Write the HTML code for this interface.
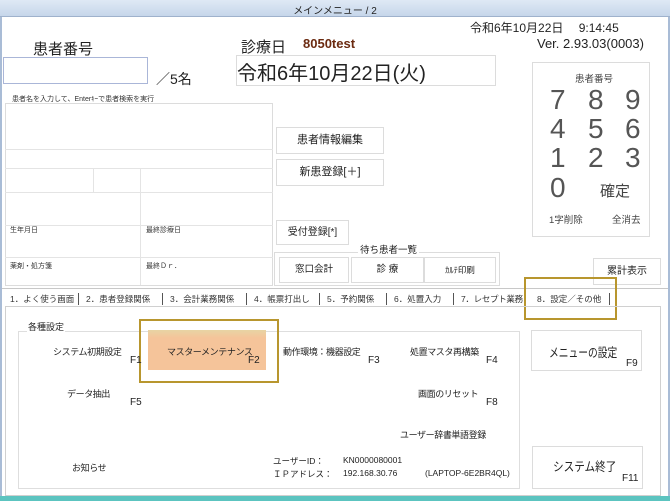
<!DOCTYPE html>
<html><head><meta charset="utf-8"><style>
*{margin:0;padding:0;box-sizing:border-box}
body{width:670px;height:501px;overflow:hidden;background:#fff;font-family:"Liberation Sans","Noto Sans CJK JP",sans-serif;color:#222;position:relative}
.a{position:absolute;white-space:nowrap}
.b{position:absolute;border:1px solid #dcdcdc;background:#fff}
.t{font-size:8.5px;color:#333}
.p{font-size:9px;letter-spacing:-0.4px}
.k{font-size:28px;color:#555;font-weight:300}
</style></head><body>
<div class="a" style="left:0;top:0;width:670px;height:17px;background:linear-gradient(#dfe9f5,#c6d6ea);border-bottom:1px solid #9fb2cc"></div>
<div class="a" style="left:0;top:2px;width:670px;text-align:center;font-size:10px;color:#222">メインメニュー / 2</div>
<div class="a" style="left:0;top:17px;width:2px;height:484px;background:#a9bcd6"></div>
<div class="a" style="left:668px;top:17px;width:2px;height:484px;background:#a9bcd6"></div>
<div class="a" style="left:0;top:496px;width:670px;height:5px;background:#5cc4c0"></div>

<div class="a" style="left:33px;top:38px;font-size:15px">患者番号</div>
<div class="b" style="left:3px;top:57px;width:145px;height:27px;border-color:#aab6d8"></div>
<div class="a" style="left:156px;top:69px;font-size:14px">／5名</div>
<div class="a" style="left:12px;top:94px;font-size:7px;color:#333">患者名を入力して、Enterｷｰで患者検索を実行</div>
<div class="b" style="left:5px;top:103px;width:268px;height:183px"></div>
<div class="a" style="left:5px;top:149px;width:268px;height:1px;background:#e4e4e4"></div>
<div class="a" style="left:5px;top:168px;width:268px;height:1px;background:#e4e4e4"></div>
<div class="a" style="left:5px;top:192px;width:268px;height:1px;background:#e4e4e4"></div>
<div class="a" style="left:5px;top:225px;width:268px;height:1px;background:#e4e4e4"></div>
<div class="a" style="left:5px;top:257px;width:268px;height:1px;background:#e4e4e4"></div>
<div class="a" style="left:93px;top:168px;width:1px;height:24px;background:#e4e4e4"></div>
<div class="a" style="left:140px;top:168px;width:1px;height:117px;background:#e4e4e4"></div>
<div class="a t" style="left:10px;top:225px;font-size:7px">生年月日</div>
<div class="a t" style="left:146px;top:225px;font-size:7px">最終診療日</div>
<div class="a t" style="left:10px;top:261px;font-size:7px">薬剤・処方箋</div>
<div class="a t" style="left:146px;top:261px;font-size:7px">最終Ｄｒ．</div>

<div class="a" style="left:241px;top:36px;font-size:15px">診療日</div>
<div class="a" style="left:303px;top:36px;font-size:13px;font-weight:bold;color:#6b2a10">8050test</div>
<div class="b" style="left:236px;top:55px;width:260px;height:31px"></div>
<div class="a" style="left:237px;top:57px;font-size:20px">令和6年10月22日(火)</div>

<div class="b" style="left:276px;top:127px;width:108px;height:27px;font-size:11px;text-align:center;line-height:25px">患者情報編集</div>
<div class="b" style="left:276px;top:159px;width:108px;height:27px;font-size:11px;text-align:center;line-height:25px">新患登録[＋]</div>
<div class="b" style="left:276px;top:220px;width:73px;height:25px;font-size:10px;text-align:center;line-height:23px">受付登録[*]</div>
<div class="b" style="left:274px;top:252px;width:226px;height:34px"></div>
<div class="a" style="left:358px;top:242px;font-size:9.5px;background:#fff;padding:0 2px">待ち患者一覧</div>
<div class="b" style="left:279px;top:257px;width:70px;height:26px;font-size:9.5px;text-align:center;line-height:24px">窓口会計</div>
<div class="b" style="left:351px;top:257px;width:73px;height:26px;font-size:9.5px;text-align:center;line-height:24px">診 療</div>
<div class="b" style="left:424px;top:257px;width:72px;height:26px;font-size:8.5px;text-align:center;line-height:24px">ｶﾙﾃ印刷</div>

<div class="a" style="left:470px;top:19px;font-size:12px">令和6年10月22日　 9:14:45</div>
<div class="a" style="left:537px;top:36px;font-size:13px">Ver. 2.93.03(0003)</div>
<div class="b" style="left:532px;top:62px;width:118px;height:175px"></div>
<div class="a" style="left:575px;top:71px;font-size:9.5px;color:#444">患者番号</div>
<div class="a k" style="left:550px;top:84px">7</div>
<div class="a k" style="left:588px;top:84px">8</div>
<div class="a k" style="left:625px;top:84px">9</div>
<div class="a k" style="left:550px;top:113px">4</div>
<div class="a k" style="left:588px;top:113px">5</div>
<div class="a k" style="left:625px;top:113px">6</div>
<div class="a k" style="left:550px;top:142px">1</div>
<div class="a k" style="left:588px;top:142px">2</div>
<div class="a k" style="left:625px;top:142px">3</div>
<div class="a k" style="left:550px;top:172px">0</div>
<div class="a" style="left:600px;top:180px;font-size:15px;color:#444">確定</div>
<div class="a" style="left:549px;top:212px;font-size:9.5px;color:#444">1字削除</div>
<div class="a" style="left:612px;top:212px;font-size:9.5px;color:#444">全消去</div>
<div class="b" style="left:593px;top:258px;width:68px;height:27px;font-size:10px;text-align:center;line-height:25px">累計表示</div>

<div class="a" style="left:2px;top:288px;width:666px;height:1px;background:#c8c8c8"></div>
<div class="a t" style="left:10px;top:293px">1．よく使う画面</div>
<div class="a" style="left:78px;top:293px;width:1px;height:12px;background:#555"></div>
<div class="a t" style="left:86px;top:293px">2．患者登録関係</div>
<div class="a" style="left:162px;top:293px;width:1px;height:12px;background:#555"></div>
<div class="a t" style="left:170px;top:293px">3．会計業務関係</div>
<div class="a" style="left:246px;top:293px;width:1px;height:12px;background:#555"></div>
<div class="a t" style="left:254px;top:293px">4．帳票打出し</div>
<div class="a" style="left:319px;top:293px;width:1px;height:12px;background:#555"></div>
<div class="a t" style="left:327px;top:293px">5．予約関係</div>
<div class="a" style="left:386px;top:293px;width:1px;height:12px;background:#555"></div>
<div class="a t" style="left:394px;top:293px">6．処置入力</div>
<div class="a" style="left:453px;top:293px;width:1px;height:12px;background:#555"></div>
<div class="a t" style="left:461px;top:293px;letter-spacing:-0.3px">7．レセプト業務</div>
<div class="a" style="left:525px;top:293px;width:1px;height:12px;background:#555"></div>
<div class="a t" style="left:537px;top:293px">8．設定／その他</div>
<div class="a" style="left:609px;top:293px;width:1px;height:12px;background:#555"></div>
<div class="a" style="left:524px;top:277px;width:93px;height:43px;border:2px solid #b8962e"></div>

<div class="a" style="left:5px;top:306px;width:656px;height:190px;border:1px solid #d0d0d0"></div>
<div class="a" style="left:18px;top:331px;width:502px;height:158px;border:1px solid #dedede"></div>
<div class="a" style="left:27px;top:320px;font-size:9px;background:#fff;padding:0 1px">各種設定</div>

<div class="a" style="left:148px;top:330px;width:118px;height:40px;background:linear-gradient(#e8d4a4 0,#f5c49a 8px,#f5c49a)"></div>
<div class="a" style="left:139px;top:319px;width:140px;height:64px;border:2px solid #b8962e"></div>
<div class="a p" style="left:53px;top:345px">システム初期設定</div>
<div class="a" style="left:130px;top:355px;font-size:10px">F1</div>
<div class="a p" style="left:167px;top:345px">マスターメンテナンス</div>
<div class="a" style="left:248px;top:355px;font-size:10px">F2</div>
<div class="a p" style="left:283px;top:345px">動作環境：機器設定</div>
<div class="a" style="left:368px;top:355px;font-size:10px">F3</div>
<div class="a p" style="left:410px;top:345px">処置マスタ再構築</div>
<div class="a" style="left:486px;top:355px;font-size:10px">F4</div>
<div class="a p" style="left:67px;top:387px">データ抽出</div>
<div class="a" style="left:130px;top:397px;font-size:10px">F5</div>
<div class="a p" style="left:418px;top:387px">画面のリセット</div>
<div class="a" style="left:486px;top:397px;font-size:10px">F8</div>
<div class="a p" style="left:400px;top:428px">ユーザー辞書単語登録</div>
<div class="a p" style="left:72px;top:461px">お知らせ</div>
<div class="a" style="left:273px;top:455px;font-size:8.5px">ユーザーID：</div>
<div class="a" style="left:343px;top:455px;font-size:8.5px">KN0000080001</div>
<div class="a" style="left:273px;top:468px;font-size:8.5px">ＩＰアドレス：</div>
<div class="a" style="left:343px;top:468px;font-size:8.5px">192.168.30.76</div>
<div class="a" style="left:425px;top:468px;font-size:8.5px">(LAPTOP-6E2BR4QL)</div>

<div class="b" style="left:531px;top:330px;width:111px;height:41px"></div>
<div class="a" style="left:549px;top:342px;font-size:12.5px;transform:scaleX(0.78);transform-origin:left">メニューの設定</div>
<div class="a" style="left:626px;top:358px;font-size:10px">F9</div>
<div class="b" style="left:532px;top:446px;width:111px;height:43px"></div>
<div class="a" style="left:553px;top:456px;font-size:12.5px;transform:scaleX(0.85);transform-origin:left">システム終了</div>
<div class="a" style="left:622px;top:473px;font-size:10px">F11</div>
</body></html>
